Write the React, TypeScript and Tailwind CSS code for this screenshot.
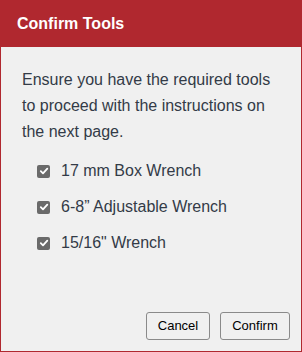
import React from "react";

function Check({ label }: { label: string }) {
  return (
    <div className="flex items-center h-[36px]">
      <div className="w-[13px] h-[13px] rounded-[2px] bg-[#6a6a6a] flex items-center justify-center ml-[15px]">
        <svg width="10" height="10" viewBox="0 0 10 10">
          <path d="M1.8 5.2 L4 7.4 L8.3 2.6" fill="none" stroke="#fff" strokeWidth="1.8" strokeLinecap="round" strokeLinejoin="round" />
        </svg>
      </div>
      <span className="ml-[11px] text-[16px] text-[#333b47]">{label}</span>
    </div>
  );
}

export default function App() {
  return (
    <div
      className="w-[302px] h-[352px] border border-[#b0282f] bg-[#f0f0f0] flex flex-col"
      style={{ fontFamily: '"Liberation Sans", Arial, sans-serif' }}
    >
      <div className="h-[46px] bg-[#b0282f] flex items-center px-[16px]">
        <span className="text-white font-bold text-[16px]">Confirm Tools</span>
      </div>
      <div className="flex-1 flex flex-col px-[21px] pt-[20px]">
        <p className="text-[16px] leading-[26px] text-[#333b47]">
          Ensure you have the required tools to proceed with the instructions on the next page.
        </p>
        <div className="mt-[8px] flex flex-col">
          <Check label="17 mm Box Wrench" />
          <Check label="6-8” Adjustable Wrench" />
          <Check label={'15/16" Wrench'} />
        </div>
        <div className="flex-1" />
        <div className="flex justify-end gap-[10px] pb-[11px] mr-[-10px]">
          <button className="h-[28px] w-[64px] border border-[#8a8a8a] rounded-[3px] bg-[#f0f0f0] text-[13px] text-black">
            Cancel
          </button>
          <button className="h-[28px] w-[70px] border border-[#8a8a8a] rounded-[3px] bg-[#f0f0f0] text-[13px] text-black">
            Confirm
          </button>
        </div>
      </div>
    </div>
  );
}
